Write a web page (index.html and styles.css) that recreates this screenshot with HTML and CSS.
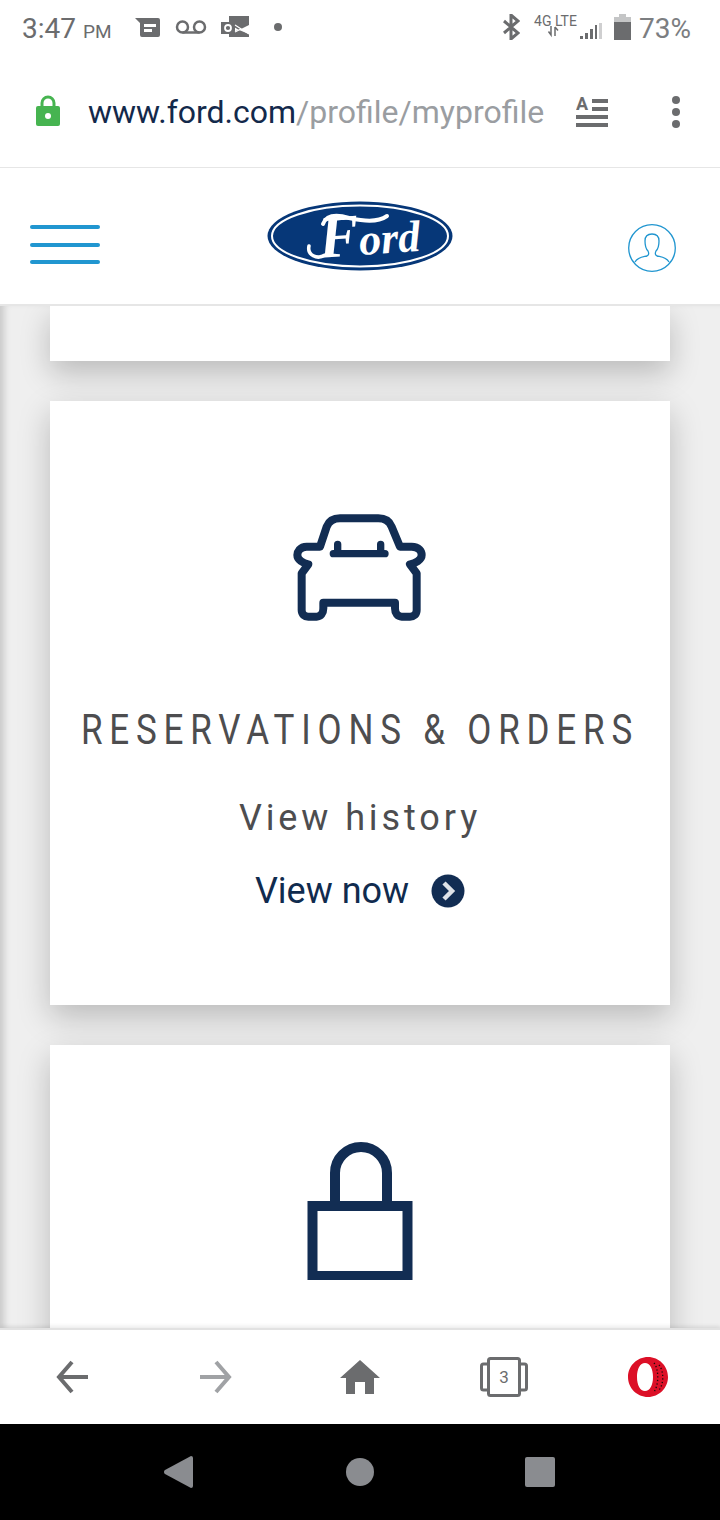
FILE: index.html
```html
<!DOCTYPE html>
<html lang="en">
<head>
    <meta charset="UTF-8">
    <meta name="viewport" content="width=device-width, initial-scale=1.0">
    <title>My Profile</title>
    <link rel="stylesheet" href="styles.css">
</head>
<body>

    <div class="status-bar">
        <span class="time">3:47 <small>PM</small></span>
        <svg class="notif-icons" width="160" height="30" viewBox="0 0 160 30">
            <!-- news -->
            <path d="M0 3H23a2 2 0 0 1 2 2V20a2 2 0 0 1-2 2H7a2 2 0 0 1-2-2V8z" fill="#6b6c6e"/>
            <path d="M9 9H21V12H9zM9 14H17V17H9z" fill="#fff"/>
            <!-- voicemail -->
            <circle cx="47.500" cy="12" r="5.500" fill="none" stroke="#6b6c6e" stroke-width="2.500"/>
            <circle cx="64.500" cy="12" r="5.500" fill="none" stroke="#6b6c6e" stroke-width="2.500"/>
            <path d="M47.500 17.500H64.500" stroke="#6b6c6e" stroke-width="2.500"/>
            <!-- outlook -->
            <path d="M94 1H114V10L104 15L114 19V22H94V18L104 15L94 9z" fill="#6b6c6e"/>
            <rect x="86" y="7" width="14" height="12" fill="#6b6c6e"/>
            <circle cx="93" cy="13" r="3" fill="none" stroke="#fff" stroke-width="1.800"/>
            <path d="M100 10L114 19M100 17L106 14" stroke="#fff" stroke-width="1.200"/>
            <circle cx="143" cy="12" r="4" fill="#6b6c6e"/>
        </svg>
        <div class="status-right">
            <svg width="17" height="26" viewBox="0 0 17 26"><path d="M1 7L15 19L8 25V1L15 7L1 19" fill="none" stroke="#6b6c6e" stroke-width="3"/></svg>
            <div class="network">
                <span>4G LTE</span>
                <svg width="68" height="26" viewBox="0 0 68 26">
                    <path d="M17 13V21M14.500 18.500L17 22L17 18M21 14V23M21 14L24 17.500" fill="none" stroke="#6b6c6e" stroke-width="1.500"/>
                    <path d="M46 23H49V26H46zM51 20H54V26H51zM56 16H59V26H56zM61 12H63V26H61z" fill="#6b6c6e"/>
                    <path d="M65 10H68V26H65z" fill="#cfcfd0"/>
                </svg>
            </div>
            <svg width="17" height="26" viewBox="0 0 17 26"><path d="M5 0H12V3H17V26H0V3H5z" fill="#c4c5c6"/><path d="M0 8H17V26H0z" fill="#6b6c6e"/></svg>
            <span class="battery">73%</span>
        </div>
    </div>

    <div class="url-bar">
        <svg class="url-lock" width="24" height="32" viewBox="0 0 24 32">
            <path d="M6 14V8a6 6 0 0 1 12 0V14" fill="none" stroke="#46b450" stroke-width="3"/>
            <rect y="11" width="24" height="20" rx="2" fill="#46b450"/>
            <circle cx="12" cy="21" r="3" fill="#fff"/>
        </svg>
        <span class="url"><b>www.ford.com</b>/profile/myprofile</span>
        <svg class="reader" width="32" height="40" viewBox="0 -5 32 40">
            <text x="0" y="13" class="reader-a">A</text>
            <path d="M16 2H32V6H16zM16 10H32V14H16zM0 18H32V22H0zM0 26H32V30H0z" fill="#6b6c6e"/>
        </svg>
        <svg class="dots" width="10" height="34" viewBox="0 0 10 34">
            <circle cx="5" cy="5" r="4" fill="#6b6c6e"/>
            <circle cx="5" cy="17" r="4" fill="#6b6c6e"/>
            <circle cx="5" cy="29" r="4" fill="#6b6c6e"/>
        </svg>
    </div>

    <header class="site-header">
        <div class="hamburger"><i></i><i></i><i></i></div>
        <svg class="ford-logo" width="186" height="70" viewBox="0 0 186 70">
            <ellipse cx="93" cy="35" rx="92.500" ry="34.500" fill="#063778"/>
            <ellipse cx="93" cy="35" rx="88" ry="30.500" fill="none" stroke="#fff" stroke-width="2"/>
            <path d="M56 23C60 13 72 14 82 17C96 20 110 22 120 15" fill="none" stroke="#fff" stroke-width="4" stroke-linecap="round"/>
            <path d="M58 54C50 59 40 54 42 45" fill="none" stroke="#fff" stroke-width="3.500" stroke-linecap="round"/>
            <text x="52" y="54" class="ford-word" transform="rotate(-4 93 40)"><tspan class="ford-cap">F</tspan>ord</text>
        </svg>
        <svg class="profile" width="48" height="48" viewBox="0 0 48 48">
            <circle cx="24" cy="24" r="23.300" fill="none" stroke="#2196d0" stroke-width="1.300"/>
            <path d="M7 38C10 33 15 33 19 32C21 31 21 29 20 27C17 24 17 20 17 17C17 12 20 10 24 10C28 10 31 12 31 17C31 20 31 24 28 27C27 29 27 31 29 32C33 33 38 33 41 38" fill="none" stroke="#2196d0" stroke-width="1.300"/>
        </svg>
    </header>

    <main class="content">
        <section class="card card-stub"></section>

        <section class="card">
            <svg class="card-icon" width="180" height="150" viewBox="0 -27 540 450">
                <path d="M150 155H110C90 155 82 170 82 180C82 195 100 205 115 208L95 235V345C95 358 104 365 115 365H140C152 365 160 355 160 340V323H375V340C375 355 383 365 395 365H420C432 365 440 358 440 345V235L420 208C435 205 455 195 455 180C455 170 447 155 425 155H390L365 95C358 78 345 70 325 70H210C190 70 177 78 170 95z" fill="none" stroke="#122d53" stroke-width="24" stroke-linejoin="round"/>
                <path d="M203 148V176H332V148M190 176H345" fill="none" stroke="#122d53" stroke-width="22" stroke-linecap="round" stroke-linejoin="round"/>
            </svg>
            <h2 class="card-title"><span>RESERVATIONS &amp; ORDERS</span></h2>
            <p class="card-sub">View history</p>
            <a class="card-link">View now
                <svg width="34" height="34" viewBox="0 0 34 34">
                    <circle cx="17" cy="17" r="16.500" fill="#122d53"/>
                    <path d="M13 9L21 17L13 25" fill="none" stroke="#dfe3e8" stroke-width="4.500"/>
                </svg>
            </a>
        </section>

        <section class="card">
            <svg class="card-icon" width="106" height="150" viewBox="0 0 106 150">
                <path d="M28 72V43a26 26 0 0 1 52 0V72" fill="none" stroke="#122d53" stroke-width="10"/>
                <rect x="5.500" y="76" width="95" height="70" fill="none" stroke="#122d53" stroke-width="10"/>
            </svg>
        </section>
    </main>

    <div class="browser-bar">
        <svg width="32" height="34" viewBox="0 0 32 34"><path d="M32 17H3M16 2L3 17L16 32" fill="none" stroke="#6b6c6e" stroke-width="4"/></svg>
        <svg width="32" height="34" viewBox="0 0 32 34"><path d="M0 17H29M16 2L29 17L16 32" fill="none" stroke="#a0a2a5" stroke-width="4"/></svg>
        <svg width="40" height="34" viewBox="0 0 40 34"><path d="M20 0L40 18H34V34H25V22H15V34H6V18H0z" fill="#6b6c6e"/></svg>
        <div class="tabs">
            <span>3</span>
            <svg width="48" height="40" viewBox="0 0 48 40">
                <rect x="8.500" y="1.500" width="31" height="37" rx="2" fill="none" stroke="#6b6c6e" stroke-width="3"/>
                <path d="M8 7H3.500a2 2 0 0 0-2 2V31a2 2 0 0 0 2 2H8M40 7H44.500a2 2 0 0 1 2 2V31a2 2 0 0 1-2 2H40" fill="none" stroke="#6b6c6e" stroke-width="3"/>
            </svg>
        </div>
        <svg width="40" height="40" viewBox="0 0 40 40">
            <path fill-rule="evenodd" d="M20 0C31 0 40 9 40 20S31 40 20 40S0 31 0 20S9 0 20 0zM17 6C12 6 9 12 9 20S12 34 17 34S25 28 25 20S22 6 17 6z" fill="#dc1027"/>
            <path d="M26 6C31 12 31 28 26 35M31 8C36 14 36 27 31 33" fill="none" stroke="#1a0a0c" stroke-width="1.300" stroke-dasharray="1.300 2.200"/>
        </svg>
    </div>

    <div class="android-nav">
        <svg class="nav-back" width="29" height="32" viewBox="0 0 29 32"><path d="M27 0A2 2 0 0 1 29 2V30A2 2 0 0 1 27 32L1 18A2.500 2.500 0 0 1 1 14z" fill="#8a8c90"/></svg>
        <svg width="30" height="30" viewBox="0 0 30 30"><circle cx="15" cy="15" r="14" fill="#8a8c90"/></svg>
        <svg width="30" height="30" viewBox="0 0 30 30"><rect width="30" height="30" rx="2" fill="#8a8c90"/></svg>
    </div>

</body>
</html>
```

FILE: styles.css
```css
* { box-sizing: border-box; }
html, body { margin: 0; padding: 0; }
body { width: 720px; height: 1520px; overflow: hidden; background: #fff; font-family: Roboto, "Liberation Sans", sans-serif; }
svg { display: block; flex: none; }

/* phone status bar */
.status-bar { height: 66px; padding: 12px 29px 0 22px; display: flex; align-items: flex-start; color: #6b6c6e; }
.time { font-size: 28px; line-height: 33px; width: 113px; white-space: nowrap; }
.time small { font-size: 19px; }
.notif-icons { margin-top: 3px; }
.status-right { margin-left: auto; display: flex; align-items: flex-start; }
.network { width: 68px; height: 26px; margin: 1px 0 0 14px; position: relative; }
.network span { position: absolute; top: 0; left: 0; font-size: 14px; line-height: 16px; white-space: nowrap; }
.status-right > svg:last-of-type { margin-left: 12px; margin-top: 2px; }
.status-right > svg:first-child { margin-top: 2px; }
.battery { font-size: 28px; line-height: 33px; margin-left: 8px; color: #7c7e81; }

/* browser address bar */
.url-bar { height: 102px; padding-left: 36px; display: flex; align-items: center; border-bottom: 1px solid #e6e6e6; }
.url-lock { margin-top: -11px; }
.url { font-size: 32px; line-height: 36px; color: #9a9da1; margin: -9px 0 0 28px; white-space: nowrap; }
.url b { font-weight: 400; color: #13294b; }
.reader { margin: -9px 0 0 32px; }
.reader-a { font-size: 18px; font-weight: 700; fill: #6b6c6e; }
.dots { margin: -9px 0 0 63px; }

/* ford header */
.site-header { height: 138px; padding: 0 44px 0 30px; display: flex; align-items: center; justify-content: space-between; border-bottom: 2px solid #e6e6e6; }
.hamburger { width: 70px; display: flex; flex-direction: column; gap: 13.500px; margin-top: 17px; }
.hamburger i { display: block; height: 4px; border-radius: 2px; background: #2196d0; }
.ford-logo { margin-left: -9px; }
.profile { margin-top: 23px; }
.ford-word { font-family: "Liberation Serif", serif; font-style: italic; font-weight: 700; font-size: 44px; fill: #fff; }
.ford-cap { font-size: 60px; }

/* cards */
.content { height: 1022px; padding: 0 50px; display: flex; flex-direction: column; gap: 40px; overflow: hidden; background: #efefef; box-shadow: inset 8px 0 7px -4px rgba(0, 0, 0, 0.16); }
.card { flex: none; height: 604px; padding-top: 85px; background: #fff; box-shadow: 0 12px 30px rgba(0, 0, 0, 0.22); display: flex; flex-direction: column; align-items: center; text-align: center; }
.card-stub { height: 55px; padding: 0; }
.card-icon { margin-bottom: 76px; }
.card-title { margin: 0; font-size: 35px; font-weight: 400; line-height: 38px; letter-spacing: 6.800px; color: #4d4d4f; white-space: nowrap; }
.card-title span { display: block; transform: scaleY(1.2); }
.card-sub { margin: 48px 0 0; font-size: 36px; line-height: 40px; letter-spacing: 3.900px; color: #4d4d4f; }
.card-link { margin-top: 31px; display: flex; align-items: center; gap: 22px; font-size: 36px; line-height: 44px; color: #102b4e; }

/* browser bottom bar */
.browser-bar { height: 96px; display: grid; grid-template-columns: repeat(5, 144px); justify-items: center; align-items: center; background: #fff; border-top: 2px solid #e2e2e2; box-shadow: 0 -2px 4px rgba(0, 0, 0, 0.08); position: relative; }
.tabs { width: 48px; height: 40px; position: relative; }
.tabs span { position: absolute; left: 0; right: 0; top: 9px; text-align: center; font-size: 17px; line-height: 22px; color: #6b6c6e; }

/* android nav */
.android-nav { height: 96px; display: grid; grid-template-columns: repeat(3, 180px); justify-content: center; justify-items: center; align-items: center; background: #000; position: relative; }
.nav-back { margin-right: 4px; }
```
